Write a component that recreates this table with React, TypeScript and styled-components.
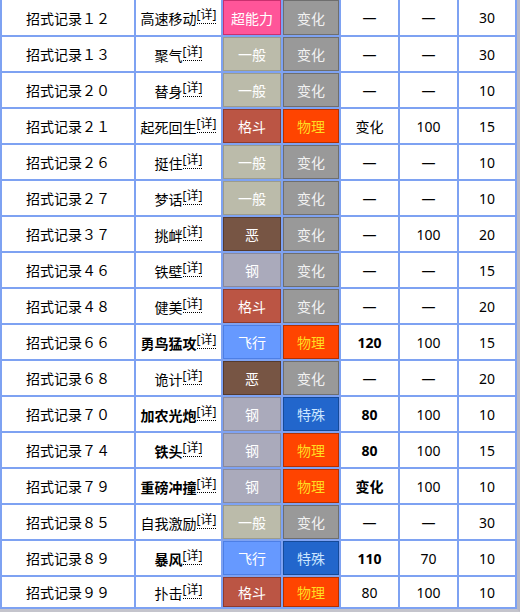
import React from 'react';
import styled, { createGlobalStyle } from 'styled-components';

const GlobalStyle = createGlobalStyle`
  html, body {
    margin: 0;
    padding: 0;
    background: #ffffff;
  }
  body {
    font-family: "Noto Sans", "Noto Sans CJK SC", sans-serif;
    color: #000;
  }
`;

const TYPES: Record<string, { bg: string; border: string; color: string }> = {
  一般: { bg: '#bbbbaa', border: '#9c9c8c', color: '#ffffff' },
  格斗: { bg: '#bb5544', border: '#8e3b2e', color: '#ffffff' },
  飞行: { bg: '#6699ff', border: '#4d7fe6', color: '#ffffff' },
  超能力: { bg: '#ff5599', border: '#c9306f', color: '#ffffff' },
  恶: { bg: '#775544', border: '#553a2e', color: '#ffffff' },
  钢: { bg: '#aaaabb', border: '#8a8a9c', color: '#ffffff' },
};

const CATEGORIES: Record<string, { bg: string; border: string; color: string }> = {
  物理: { bg: '#ff4400', border: '#b33000', color: '#ffdd22' },
  特殊: { bg: '#2266cc', border: '#154a99', color: '#cce6ff' },
  变化: { bg: '#999999', border: '#6e6e6e', color: '#f2f2f2' },
};

interface Move {
  tm: string;
  name: string;
  bold?: boolean;
  type: string;
  category: string;
  power: string;
  accuracy: string;
  pp: string;
}

const MOVES: Move[] = [
  { tm: '１２', name: '高速移动', type: '超能力', category: '变化', power: '—', accuracy: '—', pp: '30' },
  { tm: '１３', name: '聚气', type: '一般', category: '变化', power: '—', accuracy: '—', pp: '30' },
  { tm: '２０', name: '替身', type: '一般', category: '变化', power: '—', accuracy: '—', pp: '10' },
  { tm: '２１', name: '起死回生', type: '格斗', category: '物理', power: '变化', accuracy: '100', pp: '15' },
  { tm: '２６', name: '挺住', type: '一般', category: '变化', power: '—', accuracy: '—', pp: '10' },
  { tm: '２７', name: '梦话', type: '一般', category: '变化', power: '—', accuracy: '—', pp: '10' },
  { tm: '３７', name: '挑衅', type: '恶', category: '变化', power: '—', accuracy: '100', pp: '20' },
  { tm: '４６', name: '铁壁', type: '钢', category: '变化', power: '—', accuracy: '—', pp: '15' },
  { tm: '４８', name: '健美', type: '格斗', category: '变化', power: '—', accuracy: '—', pp: '20' },
  { tm: '６６', name: '勇鸟猛攻', bold: true, type: '飞行', category: '物理', power: '120', accuracy: '100', pp: '15' },
  { tm: '６８', name: '诡计', type: '恶', category: '变化', power: '—', accuracy: '—', pp: '20' },
  { tm: '７０', name: '加农光炮', bold: true, type: '钢', category: '特殊', power: '80', accuracy: '100', pp: '10' },
  { tm: '７４', name: '铁头', bold: true, type: '钢', category: '物理', power: '80', accuracy: '100', pp: '15' },
  { tm: '７９', name: '重磅冲撞', bold: true, type: '钢', category: '物理', power: '变化', accuracy: '100', pp: '10' },
  { tm: '８５', name: '自我激励', type: '一般', category: '变化', power: '—', accuracy: '—', pp: '30' },
  { tm: '８９', name: '暴风', bold: true, type: '飞行', category: '特殊', power: '110', accuracy: '70', pp: '10' },
  { tm: '９９', name: '扑击', type: '格斗', category: '物理', power: '80', accuracy: '100', pp: '10' },
];

const Frame = styled.div`
  width: 517px;
  border-right: 3px solid #b9b9c4;
  border-bottom: 3px solid #c4c4cc;
`;

const Table = styled.div`
  display: grid;
  grid-template-columns: 132px 85px 58px 56px 57px 57px 56px;
  grid-template-rows: 35px repeat(15, 34px) 30px;
  gap: 2px;
  padding: 0 2px 2px 2px;
  background: #7ea2f2;
`;

const Cell = styled.div<{ $bold?: boolean }>`
  display: flex;
  align-items: center;
  justify-content: center;
  background: #ffffff;
  font-size: 14px;
  font-weight: ${({ $bold }) => ($bold ? 700 : 400)};
  white-space: nowrap;
`;

const Badge = styled.div<{ $bg: string; $border: string; $color: string }>`
  display: flex;
  align-items: center;
  justify-content: center;
  box-sizing: border-box;
  background: ${({ $bg }) => $bg};
  border: 1px solid ${({ $border }) => $border};
  color: ${({ $color }) => $color};
  font-size: 14px;
`;

const Name = styled.span<{ $bold?: boolean }>`
  font-weight: ${({ $bold }) => ($bold ? 700 : 400)};
  line-height: 1;
`;

const Sup = styled.sup`
  font-size: 12px;
  font-weight: 400;
  vertical-align: 5px;
  line-height: 1;
`;

const Explain = styled.span`
  border-bottom: 1px dotted #000;
`;

const App = () => (
  <>
    <GlobalStyle />
    <Frame>
      <Table>
        {MOVES.map((m) => {
          const t = TYPES[m.type];
          const c = CATEGORIES[m.category];
          return (
            <React.Fragment key={m.tm}>
              <Cell>招式记录{m.tm}</Cell>
              <Cell>
                <Name $bold={m.bold}>
                  {m.name}
                  <Sup>
                    <Explain>[详]</Explain>
                  </Sup>
                </Name>
              </Cell>
              <Badge $bg={t.bg} $border={t.border} $color={t.color}>
                {m.type}
              </Badge>
              <Badge $bg={c.bg} $border={c.border} $color={c.color}>
                {m.category}
              </Badge>
              <Cell $bold={m.bold}>{m.power}</Cell>
              <Cell>{m.accuracy}</Cell>
              <Cell>{m.pp}</Cell>
            </React.Fragment>
          );
        })}
      </Table>
    </Frame>
  </>
);

export default App;
